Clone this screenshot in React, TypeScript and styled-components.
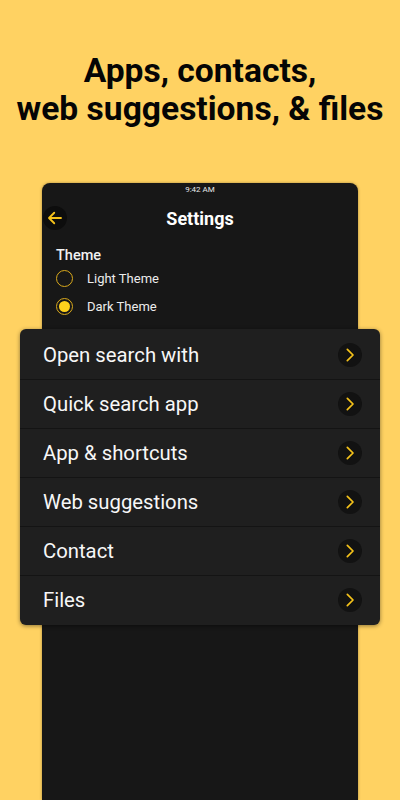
import React from 'react'
import styled, { createGlobalStyle } from 'styled-components'

const GlobalStyle = createGlobalStyle`
  html, body {
    margin: 0;
    padding: 0;
    background: #ffd262;
    font-family: Roboto, "Liberation Sans", sans-serif;
  }
`

const items = [
  'Open search with',
  'Quick search app',
  'App & shortcuts',
  'Web suggestions',
  'Contact',
  'Files',
]

const App: React.FC = () => {
  return (
    <>
      <GlobalStyle />
      <StyledPage>
        <StyledHeadline>
          Apps, contacts,
          <br />
          web suggestions, &amp; files
        </StyledHeadline>
        <StyledPhone>
          <StyledStatus>9:42 AM</StyledStatus>
          <StyledHeader>
            <StyledBack>
              <svg width="18" height="18" viewBox="0 0 24 24" fill="none" stroke="#f5c21a" strokeWidth="2.4" strokeLinecap="round" strokeLinejoin="round">
                <path d="M20 12H5" />
                <path d="M11 5l-7 7 7 7" />
              </svg>
            </StyledBack>
            <StyledTitle>Settings</StyledTitle>
          </StyledHeader>
          <StyledSection>
            <StyledSectionTitle>Theme</StyledSectionTitle>
            <StyledOption>
              <StyledRadio checked={false} />
              <StyledOptionLabel>Light Theme</StyledOptionLabel>
            </StyledOption>
            <StyledOption>
              <StyledRadio checked />
              <StyledOptionLabel>Dark Theme</StyledOptionLabel>
            </StyledOption>
          </StyledSection>
          <StyledCard>
            {items.map((item) => (
              <StyledRow key={item}>
                <StyledRowText>{item}</StyledRowText>
                <StyledChevron>
                  <svg width="16" height="16" viewBox="0 0 24 24" fill="none" stroke="#f5c21a" strokeWidth="2.6" strokeLinecap="round" strokeLinejoin="round">
                    <path d="M8 3.5l8.5 8.5L8 20.5" />
                  </svg>
                </StyledChevron>
              </StyledRow>
            ))}
          </StyledCard>
        </StyledPhone>
      </StyledPage>
    </>
  )
}

const StyledPage = styled.div`
  width: 400px;
  height: 800px;
  overflow: hidden;
  display: flex;
  flex-direction: column;
  align-items: center;
  box-sizing: border-box;
  padding-top: 52px;
`

const StyledHeadline = styled.div`
  font-size: 33.6px;
  font-weight: 700;
  line-height: 38px;
  text-align: center;
  color: #050505;
  white-space: nowrap;
`

const StyledPhone = styled.div`
  margin-top: 55px;
  width: 316px;
  flex: 1;
  background: #171717;
  border-radius: 8px 8px 0 0;
  display: flex;
  flex-direction: column;
  box-shadow: 0 0 3px rgba(0, 0, 0, 0.35);
`

const StyledStatus = styled.div`
  text-align: center;
  color: #e8e8e8;
  font-size: 8px;
  line-height: 10px;
  margin-top: 2px;
`

const StyledHeader = styled.div`
  display: flex;
  align-items: center;
  height: 36px;
  margin-top: 5px;
  padding-left: 1px;
`

const StyledBack = styled.div`
  width: 24px;
  height: 24px;
  border-radius: 50%;
  background: #0d0d0d;
  display: flex;
  align-items: center;
  justify-content: center;
`

const StyledTitle = styled.div`
  flex: 1;
  text-align: center;
  color: #ffffff;
  font-size: 18px;
  font-weight: 700;
  margin-right: 25px;
`

const StyledSection = styled.div`
  display: flex;
  flex-direction: column;
  padding: 10px 0 0 14px;
`

const StyledSectionTitle = styled.div`
  color: #f2f2f2;
  font-size: 14.5px;
  font-weight: 500;
  line-height: 20px;
  margin-bottom: -2px;
`

const StyledOption = styled.div`
  display: flex;
  align-items: center;
  height: 28px;
`

const StyledRadio = styled.div<{ checked: boolean }>`
  width: 17px;
  height: 17px;
  box-sizing: border-box;
  border-radius: 50%;
  border: 1.5px solid #d9a91c;
  display: flex;
  align-items: center;
  justify-content: center;
  &:after {
    content: "";
    width: 11px;
    height: 11px;
    border-radius: 50%;
    background: ${props => (props.checked ? '#ffd21c' : 'transparent')};
  }
`

const StyledOptionLabel = styled.div`
  margin-left: 14px;
  color: #ececec;
  font-size: 13px;
`

const StyledCard = styled.div`
  margin: 9px -22px 0;
  padding: 1px 0;
  background: #1f1f1f;
  border-radius: 6px;
  box-shadow: 0 1px 4px rgba(0, 0, 0, 0.45);
  display: flex;
  flex-direction: column;
`

const StyledRow = styled.div`
  height: 49px;
  box-sizing: border-box;
  display: flex;
  align-items: center;
  padding: 0 18px 0 23px;
  & + & {
    border-top: 1px solid #141414;
  }
`

const StyledRowText = styled.div`
  flex: 1;
  color: #f7f7f7;
  font-size: 20.3px;
`

const StyledChevron = styled.div`
  width: 24px;
  height: 24px;
  border-radius: 50%;
  background: #121212;
  display: flex;
  align-items: center;
  justify-content: center;
`

export default App
